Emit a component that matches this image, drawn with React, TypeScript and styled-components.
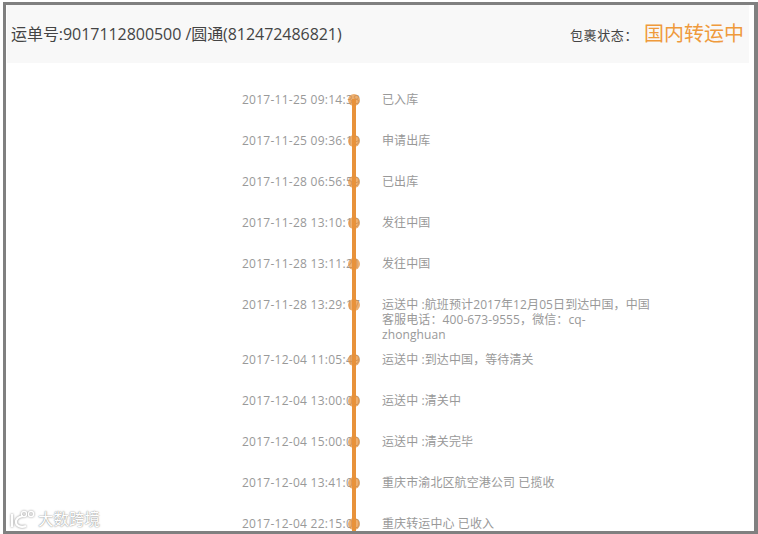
import React from 'react';
import styled, { createGlobalStyle } from 'styled-components';

const Global = createGlobalStyle`
  html, body { margin: 0; padding: 0; background: #fff; width: 758px; height: 534px; overflow: hidden; }
  body { font-family: "Open Sans", "Noto Sans CJK SC", sans-serif; }
`;

const Frame = styled.div`
  box-sizing: border-box;
  position: relative;
  width: 755px;
  height: 532px;
  margin: 2px 0 0 3px;
  border: 3px solid #808080;
  border-right-width: 4px;
  background: #fff;
  overflow: hidden;
`;

const Header = styled.header`
  box-sizing: border-box;
  display: flex;
  align-items: center;
  justify-content: space-between;
  width: 742px;
  height: 58px;
  margin-left: 1px;
  padding: 0 5px 0 4px;
  background: #f8f8f8;
`;

const Waybill = styled.h1`
  margin: 0;
  font-size: 16px;
  font-weight: 400;
  letter-spacing: -0.05px;
  color: #444;
  line-height: 20px;
`;

const Status = styled.div`
  display: flex;
  align-items: center;
  gap: 6px;
`;

const StatusLabel = styled.span`
  font-size: 13px;
  letter-spacing: 0.6px;
  color: #444;
  margin-top: 1px;
`;

const StatusValue = styled.span`
  font-size: 20px;
  color: #ef9a3c;
  line-height: 26px;
`;

const Timeline = styled.ol`
  list-style: none;
  margin: 0;
  padding: 29px 0 0;
`;

const Row = styled.li<{ $first?: boolean }>`
  position: relative;
  display: flex;
  min-height: 41px;
  box-sizing: border-box;
  padding-bottom: 10px;
  font-size: 12px;
  line-height: 15px;
  color: #999;

  &::before {
    content: '';
    position: absolute;
    left: 346px;
    top: ${p => (p.$first ? '7px' : '0')};
    bottom: 0;
    width: 4px;
    background: #e8923a;
  }
`;

const Dot = styled.span`
  position: absolute;
  left: 342px;
  top: 2px;
  width: 12px;
  height: 12px;
  border-radius: 50%;
  background: #e8923a;
  opacity: 0.72;
`;

const Time = styled.time`
  box-sizing: border-box;
  width: 354px;
  padding-left: 236px;
  white-space: nowrap;
  letter-spacing: 0.26px;
  flex: none;
`;

const Detail = styled.div`
  margin-left: 22px;
  width: 269px;
  letter-spacing: 0.1px;
  white-space: pre-line;
`;

const Watermark = styled.div`
  position: absolute;
  left: 2px;
  bottom: 2px;
  display: flex;
  align-items: center;
  gap: 2px;
  font-size: 15.5px;
  line-height: 20px;
  color: #fff;
  text-shadow: 0 0 1px #888, 0 0 2px #aaa;
`;

const rows = [
  ['2017-11-25 09:14:38', '已入库'],
  ['2017-11-25 09:36:19', '申请出库'],
  ['2017-11-28 06:56:59', '已出库'],
  ['2017-11-28 13:10:19', '发往中国'],
  ['2017-11-28 13:11:21', '发往中国'],
  ['2017-11-28 13:29:17', '运送中 :航班预计2017年12月05日到达中国，中国客服电话：400-673-9555，微信：cq-\nzhonghuan'],
  ['2017-12-04 11:05:49', '运送中 :到达中国，等待清关'],
  ['2017-12-04 13:00:00', '运送中 :清关中'],
  ['2017-12-04 15:00:00', '运送中 :清关完毕'],
  ['2017-12-04 13:41:00', '重庆市渝北区航空港公司 已揽收'],
  ['2017-12-04 22:15:00', '重庆转运中心 已收入'],
];

export default function App() {
  return (
    <>
      <Global />
      <Frame>
        <Header>
          <Waybill>运单号:9017112800500 /圆通(812472486821)</Waybill>
          <Status>
            <StatusLabel>包裹状态：</StatusLabel>
            <StatusValue>国内转运中</StatusValue>
          </Status>
        </Header>
        <Timeline>
          {rows.map(([t, d], i) => (
            <Row key={t} $first={i === 0}>
              <Time>{t}</Time>
              <Dot />
              <Detail>{d}</Detail>
            </Row>
          ))}
        </Timeline>
        <Watermark>
          <svg width="28" height="20" viewBox="0 0 28 20" fill="none" stroke="#fff" strokeWidth="2.2" style={{ filter: 'drop-shadow(0 0 1px #888)' }}>
            <path d="M4 5v13M15 7c-5 1-7 3-7 6 0 4 5 6 10 4" />
            <circle cx="16" cy="5" r="2.6" strokeWidth="1.3" />
            <circle cx="23" cy="5" r="2.6" strokeWidth="1.3" />
          </svg>
          <span>大数跨境</span>
        </Watermark>
      </Frame>
    </>
  );
}
